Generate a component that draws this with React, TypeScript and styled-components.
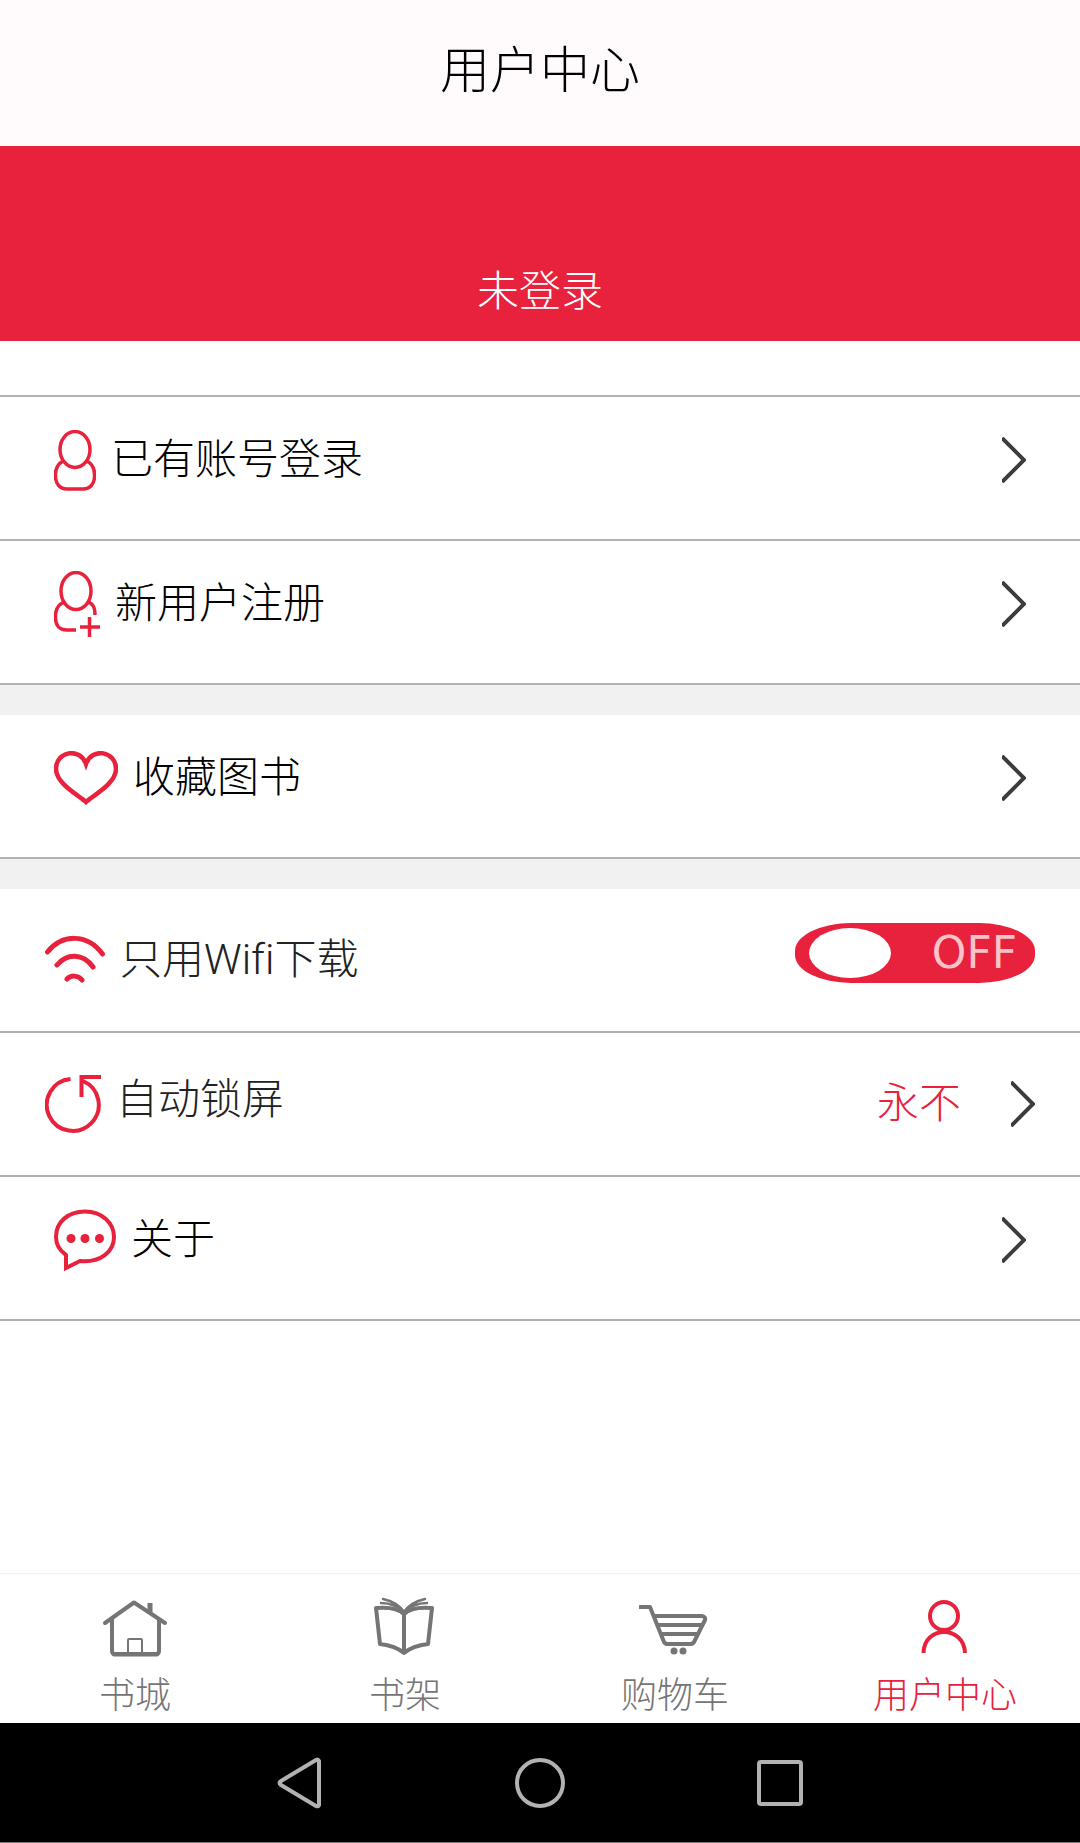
import React, { useState } from "react";
import styled, { createGlobalStyle } from "styled-components";

const red = "#e8213c";
const gray = "#757575";

const GlobalStyle = createGlobalStyle`
  * { box-sizing: border-box; }
  body {
    margin: 0;
    background: #fff;
    color: #000;
    font-family: Roboto, "Noto Sans CJK SC", sans-serif;
    font-weight: 300;
    font-variant-ligatures: none;
  }
  a { color: inherit; text-decoration: none; }
  svg { display: block; flex: none; fill: none; }
`;

const Page = styled.div`
  display: flex;
  flex-direction: column;
  min-height: 100vh;
`;

const Header = styled.header`
  display: flex;
  justify-content: center;
  padding: 41px 0 45px;
  background: #fffbfc;
`;

const Title = styled.h1`
  margin: 0;
  font-size: 50px;
  line-height: 60px;
  font-weight: 300;
`;

const Banner = styled.section`
  display: flex;
  justify-content: center;
  padding: 121px 0 24px;
  background: ${red};
  color: #fff;
  font-size: 42px;
  line-height: 50px;
`;

const Main = styled.main`
  flex: 1;
  padding-top: 54px;
`;

const Group = styled.section<{ $first?: boolean }>`
  border-top: ${(p) => (p.$first ? "2px solid #b2b2b2" : "30px solid #f1f1f1")};
`;

const Row = styled.div`
  display: flex;
  align-items: center;
  justify-content: space-between;
  height: 144px;
  padding: 0 54px 16px;
  border-bottom: 2px solid #b2b2b2;
  font-size: 42px;
  line-height: 50px;
`;

const SettingRow = styled(Row)`
  padding: 0 45px;
  color: #222;
`;

const Lead = styled.span`
  display: flex;
  align-items: center;
  gap: 15px;
`;

const SettingLead = styled(Lead)`
  align-items: flex-start;
`;

const Value = styled.span`
  display: flex;
  align-items: center;
  gap: 50px;
  color: ${red};
`;

const Switch = styled.label`
  display: flex;
  align-items: center;
  justify-content: space-between;
  width: 240px;
  height: 60px;
  margin-bottom: 14px;
  padding: 0 18px 0 14px;
  overflow: hidden;
  border-radius: 56px / 28px;
  background: ${red};
  color: #f9c3ca;
  font: 400 44px/60px "DejaVu Sans", sans-serif;
`;

const Knob = styled.input`
  appearance: none;
  width: 82px;
  height: 50px;
  margin: 0;
  border-radius: 50%;
  background: #fff;
`;

const TabBar = styled.nav`
  display: flex;
  height: 150px;
  border-top: 1px solid #f0f0f0;
`;

const Tab = styled.a<{ $active?: boolean }>`
  flex: 1;
  display: flex;
  flex-direction: column;
  align-items: center;
  padding-top: 18px;
  gap: 8px;
  color: ${(p) => (p.$active ? red : gray)};
  font-size: 36px;
  line-height: 48px;
`;

const SystemBar = styled.nav`
  display: flex;
  height: 120px;
  padding: 0 calc(100% / 6);
  border-bottom: 1px solid #777;
  background: #000;
`;

const SystemButton = styled.button`
  flex: 1;
  display: flex;
  align-items: center;
  justify-content: center;
  padding: 0;
  border: 0;
  background: none;
`;

const Chevron = () => (
  <svg width="24" height="46" viewBox="0 0 24 46" stroke="#3c3c3c" strokeWidth="4">
    <path d="M0 1 22 23 0 45" />
  </svg>
);

const UserIcon = () => (
  <svg width="42" height="61" viewBox="0 0 42 61" stroke={red} strokeWidth="3.500">
    <ellipse cx="21" cy="19.500" rx="15" ry="18" />
    <path d="M9 31C4 34 1.500 38 1.500 44v2C1.500 54 6 59 13 59h16c7 0 11.500-5 11.500-13v-2c0-6-2.500-10-7.500-13" />
  </svg>
);

const UserPlusIcon = () => (
  <svg width="46" height="66" viewBox="0 0 46 66" stroke={red} strokeWidth="3.500">
    <ellipse cx="22" cy="20" rx="15" ry="18.500" />
    <path d="M10 31C4 34 1.500 38 1.500 44v3c0 7 4 12 11 12H22M33 31c6 1 8 5 8 13M26 56h20M35.500 46v20" />
  </svg>
);

const HeartIcon = () => (
  <svg width="64" height="54" viewBox="0 0 64 54" stroke={red} strokeWidth="4.500">
    <path d="M32 51C26 45 2 33 2 18 2 0 26-4 32 13 38-4 62 0 62 18 62 33 38 45 32 51Z" />
  </svg>
);

const WifiIcon = () => (
  <svg width="60" height="48" viewBox="0 0 60 48" stroke={red} strokeWidth="5" strokeLinecap="round">
    <path d="M2.500 17C17-1 42-2 57.500 19M12 30c10-12 26-12 36 2M22 44c4-4 11-4 15 1" />
  </svg>
);

const LockIcon = () => (
  <svg width="56" height="58" viewBox="0 0 56 58" stroke={red} strokeWidth="4">
    <path d="M25.500 4A26 26 0 1 0 38 6M56 2H36.500V22" />
  </svg>
);

const ChatIcon = () => (
  <svg width="62" height="62" viewBox="0 0 62 62" stroke={red} strokeWidth="4">
    <path d="M12 46C5 41 2 35 2 28 2 13 14 2.500 31 2.500S60 14 60 28C60 43 46 54 26 52L12 59Z" />
    <g fill={red} stroke="none">
      <circle cx="17" cy="29.500" r="4.500" />
      <circle cx="31" cy="29.500" r="4.500" />
      <circle cx="45.500" cy="29.500" r="4.500" />
    </g>
  </svg>
);

const HouseIcon = () => (
  <svg width="72" height="72" viewBox="0 0 72 72" stroke={gray} strokeLinecap="round" strokeLinejoin="round">
    <path d="M6 31 35 10.500 66 31M13 28v31q0 3 3 3h41q3 0 3-3V28" strokeWidth="4" />
    <path d="M15 62.500H58" strokeWidth="4" />
    <path d="M51 11v11" strokeWidth="5" strokeLinecap="butt" />
    <path d="M29 61V48q0-1 1-1H42q1 0 1 1v13" strokeWidth="2" />
  </svg>
);

const BookIcon = () => (
  <svg width="72" height="72" viewBox="0 0 72 72" stroke={gray} strokeLinecap="round" strokeLinejoin="round">
    <path d="M35 22V61C28 55 20 53 11 52L7 16C19 15 29 16 35 22 41 16 51 15 63 16L59 52C50 53 42 55 35 61" strokeWidth="4" />
    <path d="M12 11c9 0 17 3 23 10M14 7c9 2 17 7 21 13M58 11c-9 0-17 3-23 10M56 7c-9 2-17 7-21 13" strokeWidth="2.500" />
  </svg>
);

const CartIcon = () => (
  <svg width="72" height="72" viewBox="0 0 72 72" stroke={gray} strokeWidth="4" strokeLinecap="round" strokeLinejoin="round">
    <path d="M1 15H11L25 50q1 2 4 2H51q3 0 4-2L66 28q1-3-3-4H15M18 33H62M22 42H58" />
    <g fill={gray} stroke="none">
      <circle cx="35" cy="59" r="3.500" />
      <circle cx="44" cy="59" r="3.500" />
    </g>
  </svg>
);

const AccountIcon = () => (
  <svg width="72" height="72" viewBox="0 0 72 72" stroke={red} strokeWidth="4">
    <circle cx="35" cy="24" r="14" />
    <path d="M14.500 61C15 33 55 33 56 61" />
  </svg>
);

export default function App() {
  const [wifiOnly, setWifiOnly] = useState(false);

  return (
    <>
      <GlobalStyle />
      <Page>
        <Header>
          <Title>用户中心</Title>
        </Header>
        <Banner>未登录</Banner>
        <Main>
          <Group $first>
            <Row as="a" href="#login">
              <Lead><UserIcon />已有账号登录</Lead>
              <Chevron />
            </Row>
            <Row as="a" href="#register">
              <Lead><UserPlusIcon />新用户注册</Lead>
              <Chevron />
            </Row>
          </Group>
          <Group>
            <Row as="a" href="#favorites">
              <Lead><HeartIcon />收藏图书</Lead>
              <Chevron />
            </Row>
          </Group>
          <Group>
            <SettingRow>
              <SettingLead as="label" htmlFor="wifi-only"><WifiIcon />只用Wifi下载</SettingLead>
              <Switch>
                <Knob
                  id="wifi-only"
                  type="checkbox"
                  role="switch"
                  checked={wifiOnly}
                  onChange={(e) => setWifiOnly(e.target.checked)}
                />
                {wifiOnly ? "ON" : "OFF"}
              </Switch>
            </SettingRow>
            <SettingRow as="a" href="#auto-lock">
              <SettingLead><LockIcon />自动锁屏</SettingLead>
              <Value>永不<Chevron /></Value>
            </SettingRow>
            <Row as="a" href="#about">
              <Lead><ChatIcon />关于</Lead>
              <Chevron />
            </Row>
          </Group>
        </Main>
        <TabBar>
          <Tab href="#store"><HouseIcon />书城</Tab>
          <Tab href="#shelf"><BookIcon />书架</Tab>
          <Tab href="#cart"><CartIcon />购物车</Tab>
          <Tab href="#account" $active aria-current="page"><AccountIcon />用户中心</Tab>
        </TabBar>
        <SystemBar>
          <SystemButton aria-label="返回">
            <svg width="52" height="52" viewBox="0 0 52 52" stroke="#b2b2b2" strokeWidth="4" strokeLinejoin="round">
              <path d="M45 4V48Q44 50 42 49L7 28Q4 26 7 24L42 3Q44 2 45 4Z" />
            </svg>
          </SystemButton>
          <SystemButton aria-label="主页">
            <svg width="52" height="52" viewBox="0 0 52 52" stroke="#b2b2b2" strokeWidth="4">
              <circle cx="26" cy="26" r="23" />
            </svg>
          </SystemButton>
          <SystemButton aria-label="最近任务">
            <svg width="52" height="52" viewBox="0 0 52 52" stroke="#b2b2b2" strokeWidth="4">
              <rect x="5" y="5" width="42" height="42" rx="2" />
            </svg>
          </SystemButton>
        </SystemBar>
      </Page>
    </>
  );
}
